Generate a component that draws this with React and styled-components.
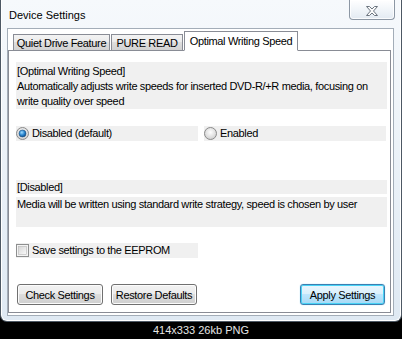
import React from 'react';
import styled, { createGlobalStyle } from 'styled-components';

const GlobalStyle = createGlobalStyle`
  html, body {
    margin: 0;
    padding: 0;
    background: #000;
  }
  body {
    font-family: "Liberation Sans", Arial, sans-serif;
    font-size: 11px;
    color: #000;
  }
`;

const Page = styled.div`
  width: 402px;
  height: 339px;
  display: flex;
  flex-direction: column;
  background: #000;
  overflow: hidden;
`;

const Window = styled.div`
  box-sizing: border-box;
  width: 402px;
  height: 322px;
  border: 1px solid #4d5864;
  border-top: none;
  border-radius: 0 0 7px 7px;
  background: linear-gradient(180deg, #f6f9fc 0%, #ecf2f8 45%, #dfe9f3 100%);
  box-shadow: inset 1px 0 0 #ffffff, inset -1px 0 0 #ffffff, inset 0 -1px 0 #ffffff;
  padding: 0 7px 5px 6px;
  display: flex;
  flex-direction: column;
`;

const TitleBar = styled.div`
  height: 28px;
  display: flex;
  align-items: flex-start;
`;

const Title = styled.div`
  padding: 8px 0 0 2px;
  line-height: 14px;
  font-size: 11px;
  color: #000;
`;

const CloseButton = styled.div`
  box-sizing: border-box;
  margin-left: auto;
  margin-right: -1px;
  width: 46px;
  height: 20px;
  border: 1px solid #8c97a4;
  border-top: none;
  border-radius: 0 0 4px 4px;
  background: linear-gradient(180deg, #ffffff 0%, #f1f5f9 50%, #e3eaf2 100%);
  box-shadow: inset 0 0 0 1px rgba(255, 255, 255, 0.8);
  display: flex;
  align-items: center;
  justify-content: center;
  padding-top: 2px;
`;

const Client = styled.div`
  flex: 1;
  border: 1px solid #a3adb8;
  background: #fff;
  padding: 1px 2px 2px 0;
  display: flex;
  flex-direction: column;
`;

const TabRow = styled.div`
  height: 20px;
  display: flex;
  align-items: flex-end;
  padding-left: 5px;
`;

const Tab = styled.div`
  box-sizing: border-box;
  width: ${p => p.$w}px;
  height: ${p => (p.$active ? 20 : 16)}px;
  margin-left: ${p => p.$ml || 0}px;
  margin-bottom: ${p => (p.$active ? -1 : 0)}px;
  border: 1px solid #898c95;
  border-bottom: ${p => (p.$active ? '1px solid #fff' : 'none')};
  background: ${p => (p.$active
    ? '#fff'
    : 'linear-gradient(180deg, #f3f3f3 0%, #ebebeb 50%, #dedede 50%, #d2d2d2 100%)')};
  display: flex;
  align-items: ${p => (p.$active ? 'flex-start' : 'center')};
  justify-content: center;
  padding-top: ${p => (p.$active ? 2 : 0)}px;
  line-height: 14px;
  letter-spacing: -0.35px;
  white-space: nowrap;
  position: relative;
  z-index: ${p => (p.$active ? 1 : 0)};
`;

const Panel = styled.div`
  flex: 1;
  border: 1px solid #898c95;
  background: #fff;
  padding: 11px 3px 0 7px;
  display: flex;
  flex-direction: column;
  letter-spacing: -0.35px;
`;

const InfoBox = styled.div`
  box-sizing: border-box;
  height: ${p => p.$h}px;
  margin-top: ${p => p.$mt || 0}px;
  background: #f0f0f0;
  padding: ${p => p.$pt || 0}px 1px 0 1px;
  line-height: ${p => p.$lh || 15}px;
  white-space: nowrap;
`;

const OptionRow = styled.div`
  display: flex;
  gap: 6px;
  margin-top: ${p => p.$mt || 0}px;
`;

const OptionCell = styled.label`
  box-sizing: border-box;
  width: 182px;
  height: 15px;
  background: #f0f0f0;
  display: flex;
  align-items: center;
  gap: 3px;
  line-height: 15px;
  white-space: nowrap;
`;

const ButtonRow = styled.div`
  display: flex;
  margin-top: 26px;
  padding: 0 2px 0 1px;
  gap: 8px;
`;

const Button = styled.div`
  box-sizing: border-box;
  width: ${p => p.$w || 86}px;
  height: 21px;
  margin-left: ${p => (p.$push ? 'auto' : '0')};
  border: 1px solid ${p => (p.$default ? '#3c7fb1' : '#707070')};
  border-radius: 3px;
  background: ${p => (p.$default
    ? 'linear-gradient(180deg, #eaf6fd 0%, #d9f0fc 50%, #bee6fd 50%, #a7d9f5 100%)'
    : 'linear-gradient(180deg, #f2f2f2 0%, #ebebeb 50%, #dddddd 50%, #cfcfcf 100%)')};
  box-shadow: ${p => (p.$default
    ? 'inset 0 0 0 1px #48d3f6, 0 0 1px #6cc6ef'
    : 'inset 0 0 0 1px #fcfcfc')};
  display: flex;
  align-items: center;
  justify-content: center;
  line-height: 14px;
  white-space: nowrap;
`;

const Caption = styled.div`
  flex: 1;
  display: flex;
  align-items: center;
  justify-content: center;
  color: #e6e6e6;
  font-size: 11px;
  line-height: 17px;
`;

const CloseGlyph = () => (
  <svg width="14" height="10" viewBox="0 0 14 10">
    <path
      d="M1.5 0.5 H4.5 L7 3 L9.5 0.5 H12.5 L8.5 5 L12.5 9.5 H9.5 L7 7 L4.5 9.5 H1.5 L5.5 5 Z"
      fill="#fbfbfb"
      stroke="#6c7580"
      strokeWidth="1"
      strokeLinejoin="round"
    />
  </svg>
);

const Radio = ({ checked }) => (
  <svg width="13" height="13" viewBox="0 0 13 13" style={{ flex: 'none' }}>
    <defs>
      <radialGradient id={checked ? 'rgOn' : 'rgOff'} cx="50%" cy="40%" r="60%">
        <stop offset="0%" stopColor="#ffffff" />
        <stop offset="100%" stopColor="#cfcfcf" />
      </radialGradient>
      <radialGradient id="dot" cx="40%" cy="35%" r="70%">
        <stop offset="0%" stopColor="#9fdcff" />
        <stop offset="55%" stopColor="#2a86d0" />
        <stop offset="100%" stopColor="#0b4a86" />
      </radialGradient>
    </defs>
    <circle cx="6.5" cy="6.5" r="6" fill={`url(#${checked ? 'rgOn' : 'rgOff'})`} stroke="#8a8a8a" />
    {checked && <circle cx="6.5" cy="6.5" r="3.5" fill="url(#dot)" stroke="#1c4f7e" strokeWidth="0.6" />}
  </svg>
);

const Checkbox = () => (
  <svg width="13" height="13" viewBox="0 0 13 13" style={{ flex: 'none' }}>
    <defs>
      <linearGradient id="cb" x1="0" y1="0" x2="1" y2="1">
        <stop offset="0%" stopColor="#d6d6d6" />
        <stop offset="100%" stopColor="#fafafa" />
      </linearGradient>
    </defs>
    <rect x="0.5" y="0.5" width="12" height="12" fill="#f4f4f4" stroke="#8e8f8f" />
    <rect x="2.5" y="2.5" width="8" height="8" fill="url(#cb)" stroke="#b8b8b8" strokeWidth="0.6" />
  </svg>
);

export default function App() {
  return (
    <Page>
      <GlobalStyle />
      <Window>
        <TitleBar>
          <Title>Device Settings</Title>
          <CloseButton><CloseGlyph /></CloseButton>
        </TitleBar>
        <Client>
          <TabRow>
            <Tab $w={97}>Quiet Drive Feature</Tab>
            <Tab $w={72} $ml={1}>PURE READ</Tab>
            <Tab $w={114} $ml={1} $active>Optimal Writing Speed</Tab>
          </TabRow>
          <Panel>
            <InfoBox $h={47} $pt={2}>
              [Optimal Writing Speed]<br />
              Automatically adjusts write speeds for inserted DVD-R/+R media, focusing on<br />
              write quality over speed
            </InfoBox>
            <OptionRow $mt={17}>
              <OptionCell><Radio checked />Disabled (default)</OptionCell>
              <OptionCell><Radio />Enabled</OptionCell>
            </OptionRow>
            <InfoBox $h={14} $mt={39} $lh={14}>[Disabled]</InfoBox>
            <InfoBox $h={30} $mt={3}>
              Media will be written using standard write strategy, speed is chosen by user
            </InfoBox>
            <OptionRow $mt={16}>
              <OptionCell><Checkbox />Save settings to the EEPROM</OptionCell>
            </OptionRow>
            <ButtonRow>
              <Button>Check Settings</Button>
              <Button>Restore Defaults</Button>
              <Button $default $push $w={85}>Apply Settings</Button>
            </ButtonRow>
          </Panel>
        </Client>
      </Window>
      <Caption>414x333 26kb PNG</Caption>
    </Page>
  );
}
